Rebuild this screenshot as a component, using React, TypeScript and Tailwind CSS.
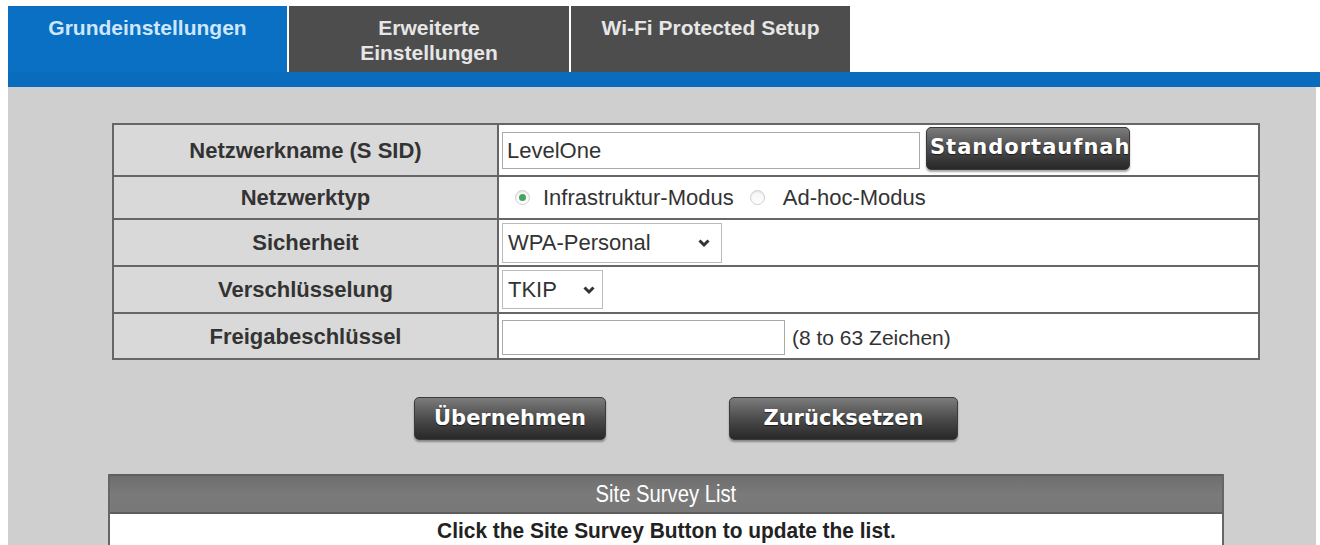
import React from 'react'

const SANS = "font-['Liberation_Sans',Arial,sans-serif]"
const BTN_FONT = "font-['DejaVu_Sans',Verdana,sans-serif]"

const TABS = [
  { label: ['Grundeinstellungen'], w: 'w-[279px]', active: true },
  { label: ['Erweiterte', 'Einstellungen'], w: 'w-[280px]', active: false },
  { label: ['Wi-Fi Protected Setup'], w: 'w-[279px]', active: false },
]

function Chevron() {
  return (
    <svg width="14" height="10" viewBox="0 0 14 10" className="shrink-0">
      <polyline points="2.5,2.5 7,7 11.5,2.5" fill="none" stroke="#333" strokeWidth="3" />
    </svg>
  )
}

function Radio({ checked }: { checked?: boolean }) {
  return (
    <span className="inline-flex w-[15px] h-[15px] rounded-full border border-[#cfcfcf] bg-gradient-to-b from-[#f4f4f4] to-white shadow-[inset_0_1px_1px_rgba(0,0,0,0.08)] items-center justify-center shrink-0">
      {checked && <span className="w-[7px] h-[7px] rounded-full bg-[#45a463]" />}
    </span>
  )
}

function DarkButton({ children, className }: { children: React.ReactNode; className?: string }) {
  return (
    <div
      className={`h-[43px] rounded-[5px] bg-gradient-to-b from-[#7c7c7c] via-[#4c4c4c] to-[#282828] shadow-[0_2px_2px_rgba(0,0,0,0.35)] border border-[#3a3a3a] flex items-center overflow-hidden whitespace-nowrap text-white font-bold text-[21px] ${BTN_FONT} [text-shadow:0_1px_1px_rgba(0,0,0,0.6)] ${className ?? ''}`}
    >
      {children}
    </div>
  )
}

const LABEL = 'bg-[#d9d9d9] border-2 border-[#666] text-center font-bold text-[22px] text-[#333] align-middle'
const VALUE = 'bg-white border-2 border-[#666] pl-[3px] align-middle'

export default function App() {
  return (
    <div className={`w-[1320px] h-[545px] bg-white overflow-hidden ${SANS}`}>
      <div className="h-[6px]" />

      {/* Tabs */}
      <div className="flex pl-2 h-[66px]">
        {TABS.map((t, i) => (
          <React.Fragment key={i}>
            {i > 0 && <div className="w-[2px] bg-white" />}
            <div
              className={`${t.w} pt-[9px] text-center font-bold text-[21px] leading-[25px] ${
                t.active ? 'bg-[#0a70c4] text-[#cfe6fb]' : 'bg-[#4d4d4d] text-[#e6e6e6]'
              }`}
            >
              {t.label.map(l => (
                <div key={l}>{l}</div>
              ))}
            </div>
          </React.Fragment>
        ))}
      </div>
      <div className="ml-2 h-[15px] bg-[#0a6cbd]" />

      {/* Panel */}
      <div className="ml-2 mr-1 h-[458px] bg-[#cfcfcf] pl-[104px] pt-[36px]">
        <div className="w-[1148px]">
          <table className="w-full border-collapse border-2 border-[#666]">
            <tbody>
              <tr className="h-[52px]">
                <td className={`${LABEL} w-[385px]`}>Netzwerkname (S SID)</td>
                <td className={VALUE}>
                  <div className="flex items-center gap-[6px]">
                    <div className="w-[418px] h-[37px] border border-[#aaa] flex items-center px-[4px] text-[22px] text-[#333]">
                      LevelOne
                    </div>
                    <DarkButton className="w-[204px] pl-[3px] -mt-[4px] tracking-[1px]">Standortaufnahme</DarkButton>
                  </div>
                </td>
              </tr>
              <tr className="h-[43px]">
                <td className={LABEL}>Netzwerktyp</td>
                <td className={VALUE}>
                  <div className="flex items-center text-[22px] text-[#333] pl-[13px]">
                    <Radio checked />
                    <span className="ml-[13px]">Infrastruktur-Modus</span>
                    <span className="ml-[16px]"><Radio /></span>
                    <span className="ml-[18px]">Ad-hoc-Modus</span>
                  </div>
                </td>
              </tr>
              <tr className="h-[47px]">
                <td className={LABEL}>Sicherheit</td>
                <td className={VALUE}>
                  <div className="w-[220px] h-[40px] border border-[#bbb] flex items-center justify-between pl-[5px] pr-[10px] text-[22px] text-[#333]">
                    <span>WPA-Personal</span>
                    <Chevron />
                  </div>
                </td>
              </tr>
              <tr className="h-[47px]">
                <td className={LABEL}>Verschlüsselung</td>
                <td className={VALUE}>
                  <div className="w-[101px] h-[39px] border border-[#bbb] flex items-center justify-between pl-[5px] pr-[6px] text-[22px] text-[#333]">
                    <span>TKIP</span>
                    <Chevron />
                  </div>
                </td>
              </tr>
              <tr className="h-[46px]">
                <td className={LABEL}>Freigabeschlüssel</td>
                <td className={VALUE}>
                  <div className="flex items-center gap-[7px] text-[21px] text-[#333]">
                    <div className="w-[283px] h-[35px] border border-[#aaa] mt-[2px]" />
                    <span className="mt-[4px]">(8 to 63 Zeichen)</span>
                  </div>
                </td>
              </tr>
            </tbody>
          </table>

          {/* Actions */}
          <div className="flex justify-center gap-[123px] mt-[37px]">
            <DarkButton className="w-[192px] justify-center">Übernehmen</DarkButton>
            <DarkButton className="w-[229px] justify-center">Zurücksetzen</DarkButton>
          </div>
        </div>

        {/* Site survey */}
        <div className="-ml-[4px] w-[1116px] mt-[34px] border-x-2 border-[#666]">
          <div className="h-[40px] bg-gradient-to-b from-[#6e6e6e] via-[#7a7a7a] to-[#787878] border-y-2 border-[#5e5e5e] flex items-center justify-center text-white text-[23px]">
            <span className="scale-x-[0.88]">Site Survey List</span>
          </div>
          <div className="bg-white h-[34px] flex items-center justify-center text-[#222] font-bold text-[22px] leading-[26px]">
            <span className="scale-x-[0.95]">Click the Site Survey Button to update the list.</span>
          </div>
        </div>
      </div>
    </div>
  )
}
